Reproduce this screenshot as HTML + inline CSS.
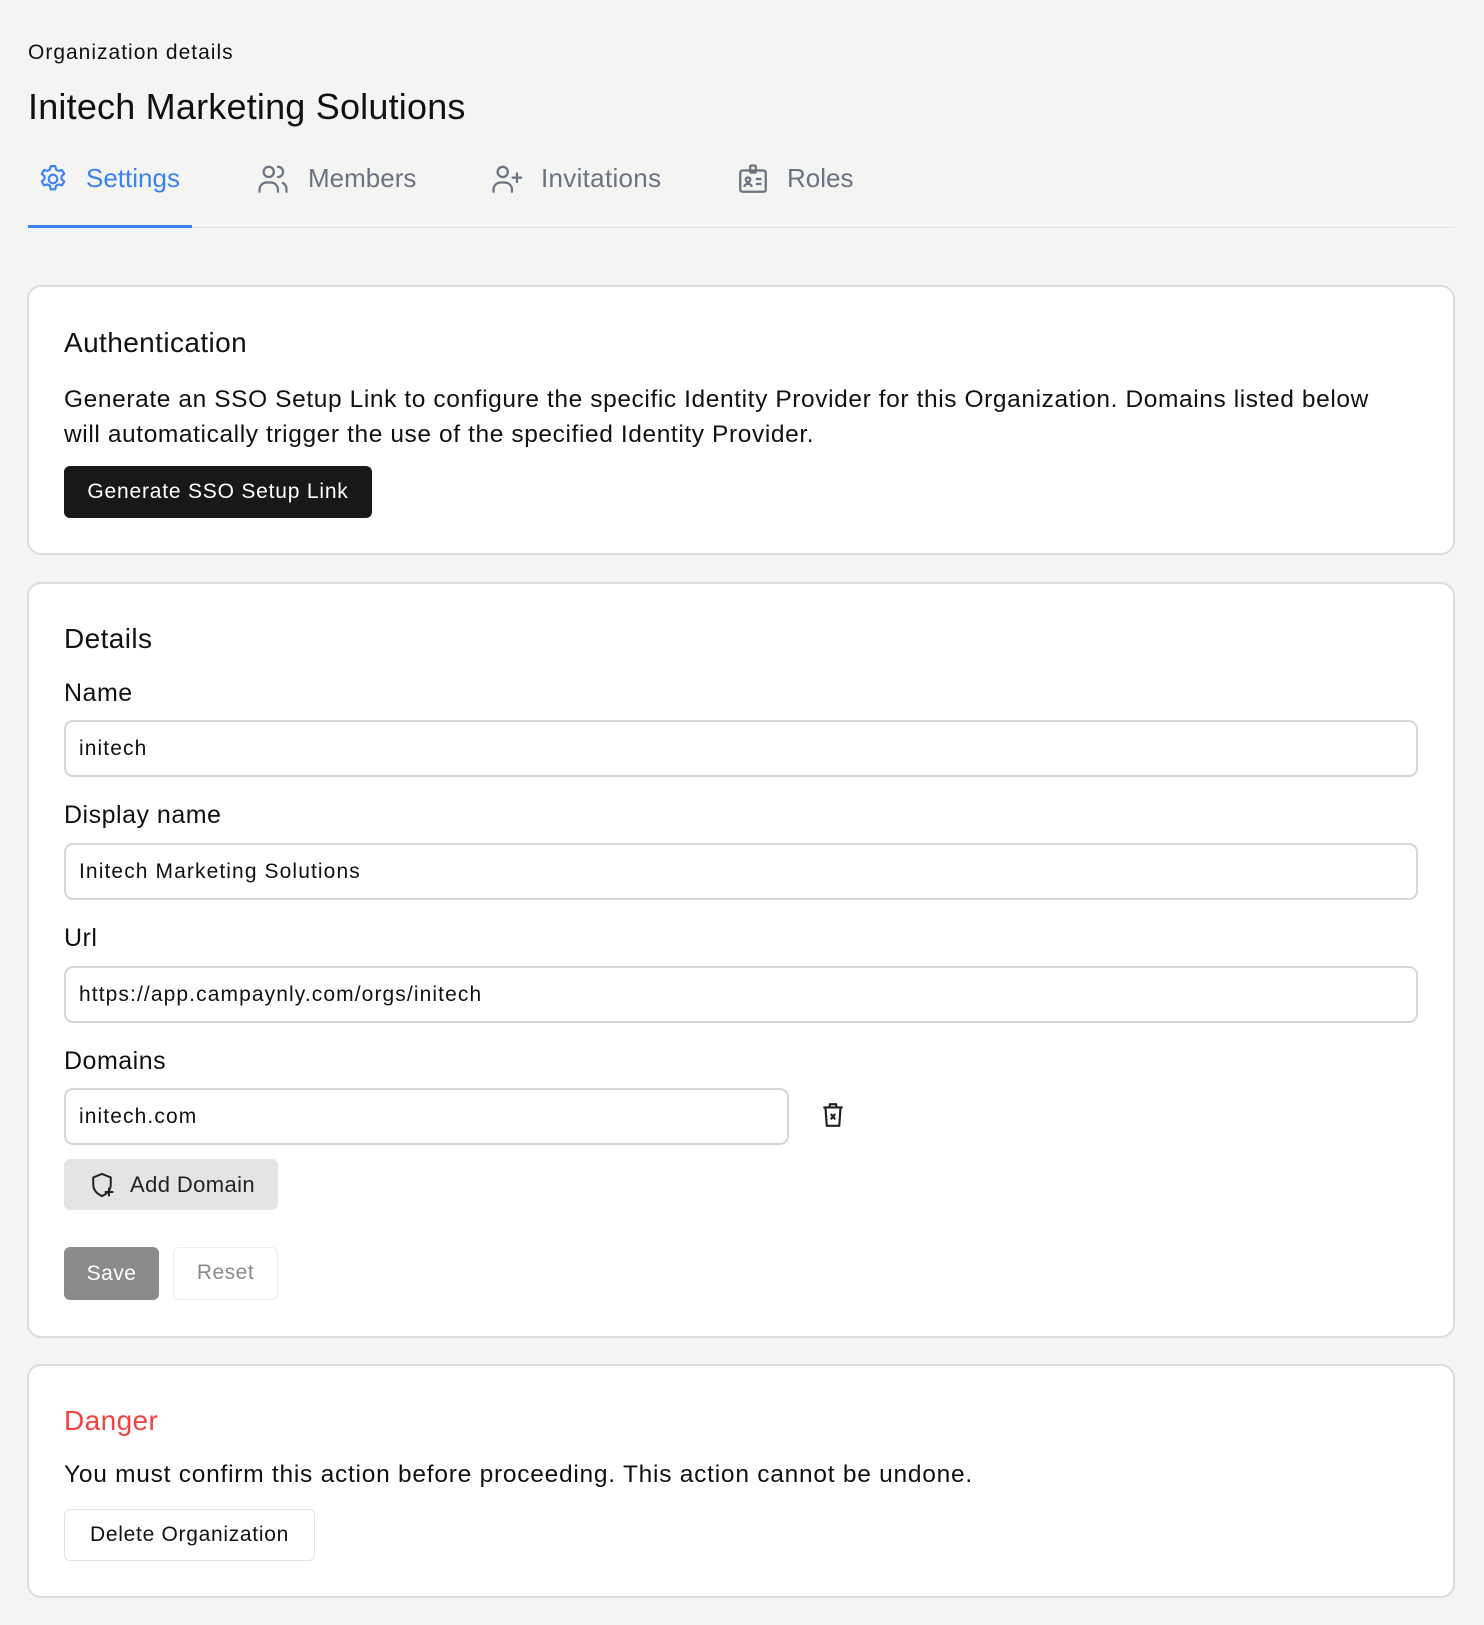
<!DOCTYPE html>
<html><head><meta charset="utf-8"><style>
*{box-sizing:border-box;margin:0;padding:0}
body{width:1484px;height:1625px;background:#f4f4f3;font-family:"Liberation Sans",sans-serif;color:#111;position:relative;overflow:hidden}
.a{position:absolute;white-space:nowrap}
.card{position:absolute;left:27px;width:1428px;background:#fff;border:2px solid #dcdcdc;border-radius:14px}
.lbl{font-size:25px;color:#111;letter-spacing:.5px}
.inp{position:absolute;left:64px;height:57px;border:2px solid #d6d6d6;border-radius:9px;background:#fff;font-size:21px;padding-left:13px;line-height:53px;letter-spacing:1.1px}
.h{font-size:28px;color:#111;letter-spacing:.4px}
</style></head><body>
<div class="a" style="left:28px;top:41px;font-size:21px;letter-spacing:1px">Organization details</div>
<div class="a" style="left:28px;top:86px;font-size:36px;letter-spacing:.2px">Initech Marketing Solutions</div>

<div class="a" style="left:37px;top:163px"><svg width="32" height="32" viewBox="0 0 24 24" fill="none" stroke="#3b82f6" stroke-width="1.6" stroke-linejoin="round"><path d="M10.3 2.3h3.4l.6 2.6 1.9 1.1 2.5-.8 1.7 2.9-2 1.8v2.2l2 1.8-1.7 2.9-2.5-.8-1.900 1.1-.6 2.6h-3.4l-.6-2.6-1.9-1.1-2.5.8-1.7-2.9 2-1.8v-2.2l-2-1.8 1.7-2.9 2.5.8 1.9-1.1z"/><circle cx="12" cy="12" r="3.2"/></svg></div>
<div class="a" style="left:86px;top:163px;font-size:26px;color:#3b82f6">Settings</div>
<div class="a" style="left:256px;top:162px"><svg width="34" height="34" viewBox="0 0 24 24" fill="none" stroke="#6b7280" stroke-width="1.6" stroke-linecap="round"><circle cx="9" cy="7" r="3.6"/><path d="M2.5 21v-1.5a5 5 0 0 1 5-5h3a5 5 0 0 1 5 5V21"/><path d="M15.5 3.4a3.6 3.6 0 0 1 0 7.2"/><path d="M19 14.8a5 5 0 0 1 2.5 4.4V21"/></svg></div>
<div class="a" style="left:308px;top:163px;font-size:26px;color:#6b7280">Members</div>
<div class="a" style="left:490px;top:162px"><svg width="34" height="34" viewBox="0 0 24 24" fill="none" stroke="#6b7280" stroke-width="1.6" stroke-linecap="round"><circle cx="9" cy="7" r="3.6"/><path d="M2.5 21v-1.5a5 5 0 0 1 5-5h3a5 5 0 0 1 5 5V21"/><path d="M19 8v6M16 11h6"/></svg></div>
<div class="a" style="left:541px;top:163px;font-size:26px;color:#6b7280;letter-spacing:.3px">Invitations</div>
<div class="a" style="left:736px;top:162px"><svg width="34" height="34" viewBox="0 0 24 24" fill="none" stroke="#6b7280" stroke-width="1.6"><rect x="3" y="6" width="18" height="15" rx="1.5"/><rect x="10" y="2.5" width="4" height="5" rx=".8"/><circle cx="8.5" cy="12.5" r="1.6"/><path d="M5.8 17.5a2.8 2.8 0 0 1 5.4 0M14 12h4M14 15.5h4"/></svg></div>
<div class="a" style="left:787px;top:163px;font-size:26px;color:#6b7280">Roles</div>
<div class="a" style="left:28px;top:227px;width:1427px;height:1px;background:#e2e2e2"></div>
<div class="a" style="left:28px;top:225px;width:164px;height:3px;background:#3b82f6"></div>

<div class="card" style="top:285px;height:270px"></div>
<div class="a h" style="left:64px;top:327px">Authentication</div>
<div class="a" style="left:64px;top:382px;font-size:24.5px;letter-spacing:.6px;line-height:35px;white-space:normal;width:1330px">Generate an SSO Setup Link to configure the specific Identity Provider for this Organization. Domains listed below will automatically trigger the use of the specified Identity Provider.</div>
<div class="a" style="left:64px;top:466px;width:308px;height:52px;background:#18181b;border-radius:6px;color:#fff;font-size:21px;letter-spacing:.8px;line-height:52px;text-align:center">Generate SSO Setup Link</div>

<div class="card" style="top:582px;height:756px"></div>
<div class="a h" style="left:64px;top:623px">Details</div>
<div class="a lbl" style="left:64px;top:679px">Name</div>
<div class="inp" style="top:720px;width:1354px">initech</div>
<div class="a lbl" style="left:64px;top:801px">Display name</div>
<div class="inp" style="top:843px;width:1354px">Initech Marketing Solutions</div>
<div class="a lbl" style="left:64px;top:924px">Url</div>
<div class="inp" style="top:966px;width:1354px">https://app.campaynly.com/orgs/initech</div>
<div class="a lbl" style="left:64px;top:1047px">Domains</div>
<div class="inp" style="top:1088px;width:725px">initech.com</div>
<div class="a" style="left:820px;top:1101px"><svg width="26" height="28" viewBox="0 0 24 26" fill="none" stroke="#222" stroke-width="2" stroke-linejoin="round"><path d="M3 6h18M9 6V3h6v3M5 6l1.2 17h11.6L19 6"/><path d="M10 12l4 5M14 12l-4 5"/></svg></div>
<div class="a" style="left:64px;top:1159px;width:214px;height:51px;background:#e4e4e7;border-radius:6px"></div>
<div class="a" style="left:88px;top:1171px"><svg width="28" height="28" viewBox="0 0 24 24" fill="none" stroke="#222" stroke-width="1.7" stroke-linecap="round" stroke-linejoin="round"><path d="M12 2.5l7.5 3v6c0 4.5-3 8-7.5 10-4.5-2-7.5-5.5-7.5-10v-6z"/><path d="M18 15v6M15 18h6" stroke-width="1.7"/></svg></div>
<div class="a" style="left:130px;top:1172px;font-size:22px;color:#222;letter-spacing:.4px">Add Domain</div>
<div class="a" style="left:64px;top:1247px;width:95px;height:53px;background:#8b8b8b;border-radius:6px;color:#fff;font-size:21px;line-height:53px;text-align:center;letter-spacing:.5px">Save</div>
<div class="a" style="left:173px;top:1247px;width:105px;height:53px;border:1.5px solid #ececec;border-radius:6px;color:#8a8a8a;font-size:21px;line-height:50px;text-align:center;background:#fff;letter-spacing:.5px">Reset</div>

<div class="card" style="top:1364px;height:234px"></div>
<div class="a h" style="left:64px;top:1405px;color:#ef4444">Danger</div>
<div class="a" style="left:64px;top:1461px;font-size:24.5px;letter-spacing:.75px">You must confirm this action before proceeding. This action cannot be undone.</div>
<div class="a" style="left:64px;top:1509px;width:251px;height:52px;border:1.5px solid #e2e2e2;border-radius:6px;font-size:21px;letter-spacing:.7px;line-height:49px;text-align:center;background:#fff">Delete Organization</div>
</body></html>
